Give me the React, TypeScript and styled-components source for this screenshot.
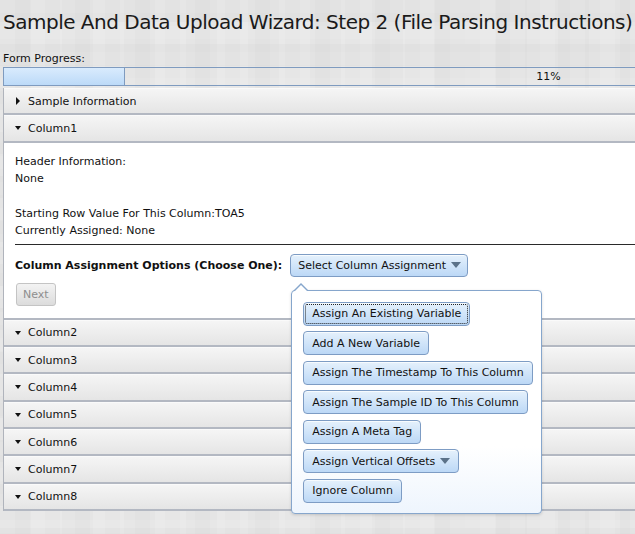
import React from "react";
import styled, { createGlobalStyle } from "styled-components";

const GlobalStyle = createGlobalStyle`
  html, body {
    margin: 0;
    padding: 0;
    overflow: hidden;
  }
  body {
    background-color: #e6e6e6;
    background-image:
      linear-gradient(90deg, rgba(255,255,255,0.10) 50%, rgba(255,255,255,0) 50%),
      linear-gradient(rgba(0,0,0,0.018) 50%, rgba(0,0,0,0) 50%),
      linear-gradient(90deg, rgba(0,0,0,0.015) 50%, rgba(0,0,0,0) 50%),
      linear-gradient(rgba(255,255,255,0.08) 50%, rgba(255,255,255,0) 50%);
    background-size: 30px 30px, 44px 44px, 62px 62px, 26px 26px;
    font-family: "DejaVu Sans", Verdana, sans-serif;
    color: #111;
    width: 635px;
    height: 534px;
  }
`;

const Page = styled.div`
  width: 1094px;
  padding: 0 0 0 3px;
  box-sizing: border-box;
`;

const Title = styled.h1`
  margin: 0;
  padding-top: 10px;
  font-size: 20px;
  font-weight: normal;
  line-height: 24px;
  letter-spacing: -0.5px;
  color: #1a1a1a;
  white-space: nowrap;
`;

const ProgressLabel = styled.div`
  margin-top: 18px;
  font-size: 11px;
  line-height: 14px;
`;

const ProgressBar = styled.div`
  position: relative;
  margin-top: 1px;
  height: 17px;
  border: 1px solid #7f9bbf;
  display: flex;
`;

const ProgressFill = styled.div`
  height: 100%;
  background: linear-gradient(#d9ebfd, #bcdaf8);
  border-right: 1px solid #7f9bbf;
`;

const ProgressText = styled.div`
  position: absolute;
  left: 0;
  right: 0;
  top: 0;
  text-align: center;
  font-size: 11px;
  line-height: 17px;
`;

const Accordion = styled.div`
  margin-top: 2px;
  border-left: 1px solid #b0b4bc;
  border-right: 1px solid #b0b4bc;
`;

const Header = styled.div`
  height: 24.33px;
  box-sizing: content-box;
  border-top: 1px solid #fafafa;
  border-bottom: 2px solid #b3b8c2;
  background: linear-gradient(#f5f5f5, #e5e5e5);
  display: flex;
  align-items: center;
  padding-left: 11px;
  font-size: 11px;
`;

const Arrow = styled.span<{ open?: boolean }>`
  display: inline-block;
  width: 0;
  height: 0;
  ${(p) =>
    p.open
      ? `border-left: 3.5px solid transparent; border-right: 3.5px solid transparent; border-top: 4px solid #111; margin-right: 7px;`
      : `border-top: 4px solid transparent; border-bottom: 4px solid transparent; border-left: 4px solid #111; margin-left: 1px; margin-right: 8px;`}
`;

const Panel = styled.div`
  background: #fff;
  padding: 10px 0 12px 11px;
  border-bottom: 2px solid #b3b8c2;
  font-size: 11px;
  line-height: 17px;
`;

const Line = styled.div`
  white-space: nowrap;
`;

const Spacer = styled.div`
  height: 18px;
`;

const Rule = styled.hr`
  margin: 5px 0 0 0;
  border: none;
  border-top: 1px solid #2a2a2a;
  height: 0;
`;

const OptionRow = styled.div`
  display: flex;
  align-items: center;
  margin-top: 9px;
  gap: 8px;
`;

const BoldLabel = styled.span`
  font-weight: bold;
  white-space: nowrap;
`;

const SelectWrap = styled.div`
  position: relative;
`;

const BlueButton = styled.button<{ focused?: boolean }>`
  font-family: "DejaVu Sans", Verdana, sans-serif;
  font-size: 11px;
  color: #111;
  height: 24px;
  padding: 0 8px;
  border: 1px solid #7d9cc4;
  border-radius: 4px;
  background: linear-gradient(#e5f1fc, #bcd8f6);
  box-shadow: inset 0 1px 0 rgba(255, 255, 255, 0.7);
  display: inline-flex;
  align-items: center;
  white-space: nowrap;
  cursor: pointer;
  align-self: flex-start;
  ${(p) => (p.focused ? `outline: 1px dotted #222; outline-offset: -3px;` : ``)}
`;

const SelectButton = styled(BlueButton)`
  height: 23px;
  padding: 0 6px 0 7px;
`;

const Caret = styled.span`
  display: inline-block;
  width: 0;
  height: 0;
  margin-left: 5px;
  border-left: 5px solid transparent;
  border-right: 5px solid transparent;
  border-top: 6px solid #5b7289;
`;

const NextButton = styled.button`
  margin-top: 6px;
  margin-left: 1px;
  font-family: "DejaVu Sans", Verdana, sans-serif;
  font-size: 11px;
  color: #8e8e8e;
  height: 23px;
  padding: 0 6px;
  border: 1px solid #c4c4c4;
  border-radius: 3px;
  background: linear-gradient(#f3f3f3, #dcdcdc);
  display: block;
`;

const Popup = styled.div`
  position: absolute;
  left: 1px;
  top: 36px;
  width: 226px;
  padding: 11px 12px 10px 11px;
  background: linear-gradient(#ffffff 70%, #eef5fd);
  border: 1px solid #86a6cc;
  border-radius: 4px;
  box-shadow: 0 1px 3px rgba(0, 0, 0, 0.15);
  display: flex;
  flex-direction: column;
  gap: 5.5px;
  z-index: 10;
  &::before {
    content: "";
    position: absolute;
    left: 1px;
    top: -8px;
    border-left: 8px solid transparent;
    border-right: 8px solid transparent;
    border-bottom: 8px solid #86a6cc;
  }
  &::after {
    content: "";
    position: absolute;
    left: 2px;
    top: -6px;
    border-left: 7px solid transparent;
    border-right: 7px solid transparent;
    border-bottom: 7px solid #ffffff;
  }
`;

const options = [
  "Assign An Existing Variable",
  "Add A New Variable",
  "Assign The Timestamp To This Column",
  "Assign The Sample ID To This Column",
  "Assign A Meta Tag",
  "Assign Vertical Offsets",
  "Ignore Column",
];

export default function App() {
  const progress = 11;
  return (
    <>
      <GlobalStyle />
      <Page>
        <Title>Sample And Data Upload Wizard: Step 2 (File Parsing Instructions)</Title>
        <ProgressLabel>Form Progress:</ProgressLabel>
        <ProgressBar>
          <ProgressFill style={{ width: `${progress}%` }} />
          <ProgressText>{progress}%</ProgressText>
        </ProgressBar>
        <Accordion>
          <Header>
            <Arrow />
            Sample Information
          </Header>
          <Header>
            <Arrow open />
            Column1
          </Header>
          <Panel>
            <Line>Header Information:</Line>
            <Line>None</Line>
            <Spacer />
            <Line>Starting Row Value For This Column:TOA5</Line>
            <Line>Currently Assigned: None</Line>
            <Rule />
            <OptionRow>
              <BoldLabel>Column Assignment Options (Choose One):</BoldLabel>
              <SelectWrap>
                <SelectButton>
                  Select Column Assignment
                  <Caret />
                </SelectButton>
                <Popup>
                  {options.map((o, i) => (
                    <BlueButton key={o} focused={i === 0}>
                      {o}
                      {o === "Assign Vertical Offsets" && <Caret />}
                    </BlueButton>
                  ))}
                </Popup>
              </SelectWrap>
            </OptionRow>
            <NextButton disabled>Next</NextButton>
          </Panel>
          {[2, 3, 4, 5, 6, 7, 8].map((n) => (
            <Header key={n}>
              <Arrow open />
              Column{n}
            </Header>
          ))}
        </Accordion>
      </Page>
    </>
  );
}
